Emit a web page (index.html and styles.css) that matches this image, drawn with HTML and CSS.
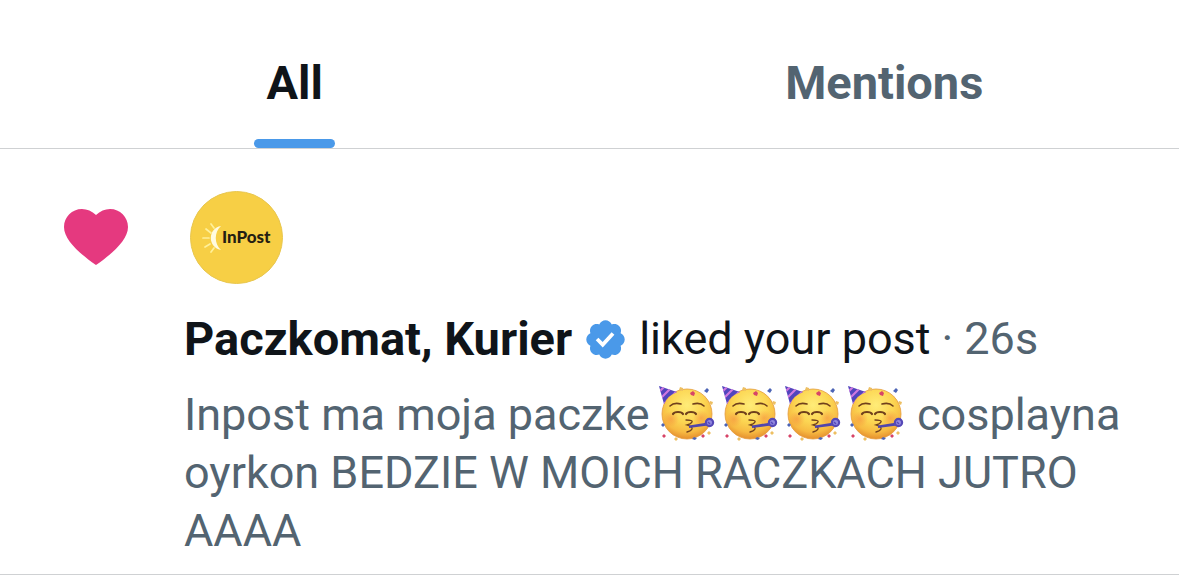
FILE: index.html
```html
<!DOCTYPE html>
<html lang="en">
<head>
<meta charset="utf-8">
<title>Notifications</title>
<link rel="stylesheet" href="styles.css">
</head>
<body>
<svg class="defs" aria-hidden="true">
  <defs>
    <radialGradient id="face-fill" cx="50%" cy="32%" r="68%">
      <stop offset="0" stop-color="#ffec78"/>
      <stop offset=".5" stop-color="#fcd653"/>
      <stop offset=".8" stop-color="#f7ba42"/>
      <stop offset="1" stop-color="#e58f2e"/>
    </radialGradient>
    <radialGradient id="blush">
      <stop offset="0" stop-color="#f47c3c" stop-opacity=".45"/>
      <stop offset="1" stop-color="#f47c3c" stop-opacity="0"/>
    </radialGradient>
    <clipPath id="hat-shape"><path d="M1 1l18 6q-9 3-13 12z"/></clipPath>
    <symbol id="party-face" viewBox="0 0 58 58">
      <circle cx="29" cy="29" r="25" fill="url(#face-fill)" stroke="#e59a3a" stroke-width=".8"/>
      <circle cx="13" cy="34" r="8" fill="url(#blush)"/>
      <circle cx="43" cy="33" r="8" fill="url(#blush)"/>
      <g clip-path="url(#hat-shape)">
        <path d="M0 0h20v20H0z" fill="#5145bd"/>
        <path d="M-1 9L9-1M1 15L14 2M3 22L20 5" stroke="#cf79df" stroke-width="2.2"/>
      </g>
      <g fill="none" stroke="#70401c" stroke-width="1.6" stroke-linecap="round">
        <path d="M12 21q4-4 11-2M35 19q7-2 11 2"/>
        <path d="M15 29q1-2 5-2t5 2M28 29q1-2 5-2t5 2" stroke-width="2.2"/>
        <path d="M28 35q7 0 6 2t-5 3q6 2 5 4t-5 3" stroke-width="1.3"/>
      </g>
      <path d="M31 40.500l19-3v3l-19 2.500z" fill="#5145ad"/>
      <circle cx="51.500" cy="37.500" r="3.600" fill="#9288df" stroke="#5548b7" stroke-width="2.200"/>
      <path d="M50 37l2 2" stroke="#5548b7" stroke-width="1.5"/>
      <g fill="#d74468">
        <path d="M35 6l2 2-1 3-3-1-1-2zM6 49l2 2-2 2-2-2zM45 49l2 2-2 2-2-2z"/>
      </g>
      <g fill="#4c64b5">
        <path d="M49 3l2 2-2 3-3-2zM5 38l2 2-2 2-2-2zM36 52l3 1-2 2-3-1z"/>
      </g>
      <g fill="#edbf62">
        <path d="M22 2l3 1v3l-4-1zM52 16l3 1-1 3-3-2zM18 52l2 2-2 2-2-2zM51 46l2 2-2 2-2-2z"/>
      </g>
    </symbol>
  </defs>
</svg>

<nav class="tabs">
  <a class="tab tab-active" href="#all" aria-current="page">All</a>
  <a class="tab" href="#mentions">Mentions</a>
</nav>

<main>
  <article class="notification">
    <svg class="heart" viewBox="0 0 64 56" aria-label="Like" role="img">
      <path d="M32 6C36 2 41 0 46 0C56 0 64 8 64 18C64 31 48 45 32 56C16 45 0 31 0 18C0 8 8 0 18 0C23 0 28 2 32 6Z"/>
    </svg>
    <div class="content">
      <a class="avatar" href="#profile" aria-label="InPost">
        <svg class="logo" viewBox="0 0 93 93">
          <circle cx="46.5" cy="46.5" r="46" fill="#f7cf45" stroke="#e8c64e"/>
          <path d="M31 35C18 37 17 56 31 59C24 53 24 41 31 35Z" fill="#fffbe0"/>
          <g stroke="#fff09a" stroke-width="1.7" stroke-linecap="round">
            <path d="M21 33l3 4M16 38l5 4M13 47h6M15 56l5-3M21 61l3-4"/>
          </g>
          <text class="logo-name" x="32" y="52">InPost</text>
        </svg>
      </a>
      <p class="headline">
        <a class="name" href="#profile">Paczkomat, Kurier</a>
        <svg class="badge" viewBox="0 0 22 22" role="img" aria-label="Verified">
          <path d="M20.396 11c-.018-.646-.215-1.275-.57-1.816-.354-.54-.852-.972-1.438-1.246.223-.607.27-1.264.14-1.897-.131-.634-.437-1.218-.882-1.687-.47-.445-1.053-.75-1.687-.882-.633-.13-1.29-.083-1.897.14-.273-.587-.704-1.086-1.245-1.44S11.647 1.62 11 1.604c-.646.017-1.273.213-1.813.568s-.969.854-1.24 1.44c-.608-.223-1.267-.272-1.902-.14-.635.13-1.22.436-1.69.882-.445.47-.749 1.055-.878 1.688-.13.633-.08 1.29.144 1.896-.587.274-1.087.705-1.443 1.245-.356.54-.555 1.17-.574 1.817.02.647.218 1.276.574 1.817.356.54.856.972 1.443 1.245-.224.606-.274 1.263-.144 1.896.13.634.433 1.218.877 1.688.47.443 1.054.747 1.687.878.633.132 1.29.084 1.897-.136.274.586.705 1.084 1.246 1.439.54.354 1.17.551 1.816.569.647-.016 1.276-.213 1.817-.567s.972-.854 1.245-1.44c.604.239 1.266.296 1.903.164.636-.132 1.22-.447 1.68-.907.46-.46.776-1.044.908-1.681s.075-1.299-.165-1.903c.586-.274 1.084-.705 1.439-1.246.354-.54.551-1.17.569-1.816zM9.662 14.85l-3.429-3.428 1.293-1.302 2.072 2.072 4.4-4.794 1.347 1.246z"/>
        </svg>
        <span>liked your post</span>
        <span class="time">·</span>
        <time class="time">26s</time>
      </p>
      <p class="post">Inpost ma moja paczke <span class="emojis" role="img" aria-label="Four partying faces"><svg class="emoji"><use href="#party-face"/></svg><svg class="emoji"><use href="#party-face"/></svg><svg class="emoji"><use href="#party-face"/></svg><svg class="emoji"><use href="#party-face"/></svg></span> cosplayna oyrkon BEDZIE W MOICH RACZKACH JUTRO AAAA</p>
    </div>
  </article>
</main>
</body>
</html>
```
FILE: styles.css
```css
body {
  margin: 0;
  background: #fff;
  color: #0f1419;
  font-family: Roboto, "Liberation Sans", sans-serif;
  font-size: 45px;
}

a {
  color: inherit;
  text-decoration: none;
}

.defs {
  position: absolute;
  width: 0;
  height: 0;
}

.tabs {
  display: grid;
  grid-template-columns: 1fr 1fr;
  padding-top: 54px;
  border-bottom: 1px solid #cfd1d3;
}

.tab {
  display: flex;
  flex-direction: column;
  align-items: center;
  gap: 27px;
  color: #536471;
  font-size: 47px;
  font-weight: 700;
  line-height: 58px;
}

.tab-active {
  color: #0f1419;
}

.tab-active::after {
  content: "";
  width: 81px;
  height: 9px;
  border-radius: 5px;
  background: #4a99e9;
}

.notification {
  display: flex;
  gap: 56px;
  padding: 42px 48px 14px 64px;
  border-bottom: 1px solid #cfd1d3;
}

.heart {
  flex: none;
  width: 64px;
  height: 56px;
  margin-top: 18px;
  fill: #e5397f;
}

.content {
  flex: 1;
  min-width: 0;
}

.avatar {
  display: block;
  width: 93px;
  margin-left: 6px;
}

.logo {
  display: block;
  width: 93px;
  height: 93px;
}

.logo-name {
  font-family: Lato, sans-serif;
  font-size: 17px;
  font-weight: 900;
  fill: #251e12;
}

.headline {
  display: flex;
  align-items: center;
  gap: 11px;
  margin: 26px 0 18px;
  line-height: 58px;
}

.name {
  font-size: 47px;
  font-weight: 700;
}

.badge {
  width: 45px;
  height: 45px;
  fill: #4a99e9;
}

.time {
  color: #536471;
}

.post {
  margin: 0;
  color: #536471;
  line-height: 58px;
}

.emojis {
  display: inline-flex;
  align-items: center;
  gap: 5px;
  height: 46px;
  margin: 0 1px 0 -3px;
  vertical-align: -13px;
}

.emoji {
  width: 58px;
  height: 58px;
}
```
